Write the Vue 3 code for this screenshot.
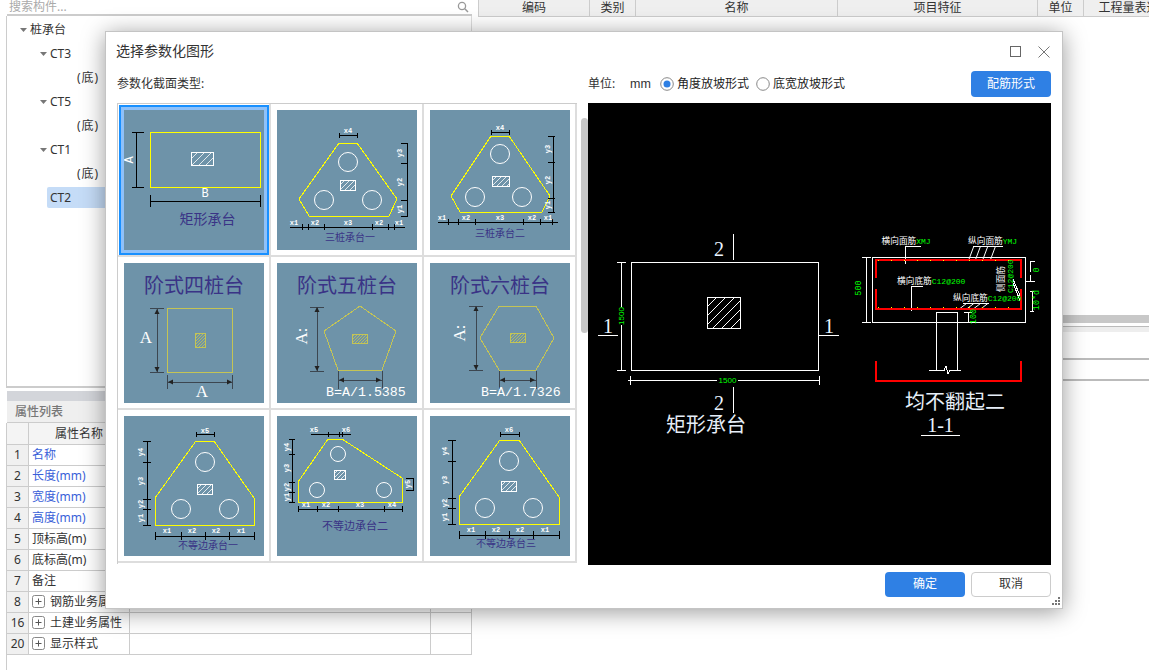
<script setup>
const hd = (y, xs, t = 3, a, b) => [
  [a ?? xs[0], y, b ?? xs[xs.length - 1], y],
  ...xs.map((x) => [x, y - t, x, y + t])
]
const vd = (x, ys, t = 4, dx = 0) => [
  [x, ys[0], x, ys[ys.length - 1]],
  ...ys.map((y) => [x - t + dx, y, x + t + dx, y])
]
const lb = (x, y, t, rot = false) => ({ x, y, t, rot })
const hatchLines = (x, y, w, h, step) => {
  const out = []
  for (let c = step; c < w + h; c += step) {
    const s = c <= w ? [x + c, y] : [x + w, y + c - w]
    const e = c <= h ? [x, y + c] : [x + c - h, y + h]
    out.push([s[0], s[1], e[0], e[1]])
  }
  return out
}
const T = (o) => ({ circles: [], lines: [], labels: [], arrows: [], color: '#ffff00', hcolor: '#fff', ...o })

const arrowV = (x, a, b) => [`${x - 2.5},${a + 5} ${x + 2.5},${a + 5} ${x},${a}`, `${x - 2.5},${b - 5} ${x + 2.5},${b - 5} ${x},${b}`]
const arrowH = (y, a, b) => [`${a + 5},${y - 2.5} ${a + 5},${y + 2.5} ${a},${y}`, `${b - 5},${y - 2.5} ${b - 5},${y + 2.5} ${b},${y}`]

const tiles = [
  T({
    rect: [26.5, 22.5, 110, 55], hatch: [67, 42, 22, 13, 7], selected: true,
    lines: [...vd(12.5, [22.5, 77.5], 6, 1.5), ...hd(91, [26.5, 136.5], 6)],
    big: [{ x: 6, y: 50, t: 'A', rot: true }, { x: 81, y: 84, t: 'B' }],
    title: { x: 83.5, y: 114, t: '矩形承台', cls: 't14' }
  }),
  T({
    poly: '62,33 80,33 120,89 112,106 32,106 22,89', hatch: [63, 70, 15, 10, 5],
    circles: [[71, 52, 9.5], [47, 90, 9.5], [95, 90, 9.5]],
    lines: [
      ...hd(25, [62, 80], 2.5),
      ...vd(130, [33, 53, 90, 106], 3.5, -3),
      ...hd(117, [25, 31, 47, 95, 111, 117], 3, 13, 128)
    ],
    labels: [lb(71, 21, 'x4'), lb(123, 43, 'y3', true), lb(123, 72, 'y2', true), lb(123, 99, 'y1', true), lb(17, 113, 'x1'), lb(38, 113, 'x2'), lb(71, 113, 'x3'), lb(102, 113, 'x2'), lb(122, 113, 'x1')],
    title: { x: 73, y: 131, t: '三桩承台一', cls: 't10' }
  }),
  T({
    poly: '61,26 79,26 120,86 112,102 30,102 21,86', hatch: [62, 66, 17, 10, 5],
    circles: [[70, 44, 9.5], [45, 87, 9.5], [92, 87, 9.5]],
    lines: [
      ...hd(22, [61, 79], 2.5),
      ...vd(123, [26, 52, 88, 102], 3.5, -2),
      ...hd(112, [18, 28, 45, 93, 110, 122], 3, 8, 128)
    ],
    labels: [lb(70, 18, 'x4'), lb(118, 39, 'y3', true), lb(118, 70, 'y2', true), lb(118, 95, 'y1', true), lb(12, 108, 'x1'), lb(36, 108, 'x2'), lb(70, 108, 'x3'), lb(102, 108, 'x2'), lb(118, 108, 'x1')],
    title: { x: 70, y: 127, t: '三桩承台二', cls: 't10' }
  }),
  T({
    color: '#c4c455', hcolor: '#c4c455',
    rect: [43.5, 45.5, 65, 64], hatch: [71, 70, 10, 14, 3],
    dark: [...vd(33, [45.5, 109], 7), ...hd(119, [43.5, 108], 7)],
    arrows: [...arrowV(33, 46, 109), ...arrowH(119, 44, 108)],
    serif: [{ x: 22, y: 80, t: 'A' }, { x: 78, y: 134, t: 'A' }],
    title: { x: 70, y: 30, t: '阶式四桩台', cls: 't20' }
  }),
  T({
    color: '#c4c455', hcolor: '#c4c455',
    poly: '83,43 119,68 105,107 61,107 47,68', hatch: [75, 71, 15, 9, 3],
    dark: [...vd(40, [44, 108], 7), ...hd(117, [61, 105], 9)],
    arrows: [...arrowV(40, 44, 108), ...arrowH(117, 62, 104)],
    serif: [{ x: 30, y: 73, t: 'A:', rot: true }],
    mono: { x: 49, y: 133, t: 'B=A/1.5385' },
    title: { x: 70, y: 30, t: '阶式五桩台', cls: 't20' }
  }),
  T({
    color: '#c4c455', hcolor: '#c4c455',
    poly: '69,43 106,43 124,75 106,107 69,107 50,75', hatch: [80, 70, 15, 9, 3],
    dark: [...vd(46, [43, 107], 7), ...hd(117, [69, 106], 9)],
    arrows: [...arrowV(46, 43, 107), ...arrowH(117, 70, 105)],
    serif: [{ x: 35, y: 70, t: 'A:', rot: true }],
    mono: { x: 51, y: 133, t: 'B=A/1.7326' },
    title: { x: 70, y: 30, t: '阶式六桩台', cls: 't20' }
  }),
  T({
    poly: '72,25 90,25 130,82 130,109 31,109 31,82', hatch: [73, 68, 15, 10, 5],
    circles: [[81, 46, 9.5], [57, 93, 9.5], [105, 93, 9.5]],
    lines: [
      ...hd(18, [72, 90], 2.5),
      ...vd(23, [25, 46, 83, 93, 109], 4, 0),
      ...hd(120, [31, 57, 81, 105, 130], 4)
    ],
    labels: [lb(81, 15, 'x5'), lb(17, 36, 'y4', true), lb(17, 65, 'y3', true), lb(17, 88, 'y2', true), lb(17, 102, 'y1', true), lb(43, 115, 'x1'), lb(68, 115, 'x2'), lb(92, 115, 'x2'), lb(117, 115, 'x1')],
    title: { x: 84, y: 133, t: '不等边承台一', cls: 't10' }
  }),
  T({
    poly: '51,23 65,23 125,62 125,86 21,86 21,66', hatch: [57, 54, 11, 9, 4],
    circles: [[61, 38, 7.5], [40, 74, 7.5], [107, 74, 7.5]],
    lines: [
      ...hd(18, [51, 62, 65], 2.5, 34, 74),
      ...vd(15, [23, 38, 66, 76, 86], 3, 0),
      ...vd(136, [62, 74], 4, -3),
      ...hd(93, [21, 40, 61, 107, 125], 3)
    ],
    labels: [lb(37, 14, 'x5'), lb(69, 14, 'x6'), lb(10, 31, 'y4', true), lb(10, 52, 'y3', true), lb(10, 71, 'y2', true), lb(10, 81, 'y1', true), lb(131, 68, 'y5', true), lb(29, 89, 'x1'), lb(49, 89, 'x2'), lb(83, 89, 'x3'), lb(115, 89, 'x4')],
    title: { x: 78, y: 114, t: '不等边承台二', cls: 't11' }
  }),
  T({
    poly: '70,24 89,24 129,81 129,108 29,108 29,81', hatch: [71, 65, 15, 10, 5],
    circles: [[79, 45, 9.5], [55, 92, 9.5], [103, 92, 9.5]],
    lines: [
      ...hd(18, [70, 89], 2.5),
      ...vd(22, [24, 45, 82, 92, 108], 4, 0),
      ...hd(119, [29, 55, 79, 103, 129], 4)
    ],
    labels: [lb(79, 14, 'x6'), lb(15, 35, 'y4', true), lb(15, 64, 'y3', true), lb(15, 87, 'y2', true), lb(15, 101, 'y1', true), lb(41, 114, 'x1'), lb(66, 114, 'x2'), lb(90, 114, 'x2'), lb(115, 114, 'x1')],
    title: { x: 76, y: 131, t: '不等边承台三', cls: 't10' }
  })
]

const treeRows = [
  { t: '桩承台', lvl: 0, arrow: true },
  { t: 'CT3', lvl: 1, arrow: true },
  { t: '(底)', lvl: 2 },
  { t: 'CT5', lvl: 1, arrow: true },
  { t: '(底)', lvl: 2 },
  { t: 'CT1', lvl: 1, arrow: true },
  { t: '(底)', lvl: 2 },
  { t: 'CT2', lvl: 1, sel: true }
]
const props = [
  { n: 1, t: '名称', blue: true },
  { n: 2, t: '长度(mm)', blue: true },
  { n: 3, t: '宽度(mm)', blue: true },
  { n: 4, t: '高度(mm)', blue: true },
  { n: 5, t: '顶标高(m)' },
  { n: 6, t: '底标高(m)' },
  { n: 7, t: '备注' },
  { n: 8, t: '钢筋业务属性', plus: true },
  { n: 16, t: '土建业务属性', plus: true },
  { n: 20, t: '显示样式', plus: true }
]
const cols = [
  { t: '编码', w: 111 }, { t: '类别', w: 46 }, { t: '名称', w: 202 },
  { t: '项目特征', w: 200 }, { t: '单位', w: 46 }, { t: '工程量表达式', w: 102 }
]
const prevHatch = hatchLines(119.5, 194.5, 33, 31, 9)
const topSlants = [[355, 108], [375, 108], [397, 108], [420, 108]].map(([x, y]) => [262 + x / 3, 122 + y / 3, 262 + (x + 16) / 3, 122 + 65 / 3])
const botSlants = [[328, 252], [350, 252], [370, 252], [392, 252]].map(([x, y]) => [262 + x / 3, 122 + y / 3, 262 + (x + 22) / 3, 122 + 235 / 3])
</script>

<template>
  <div class="page">
    <aside class="left">
      <div class="search">
        <span>搜索构件...</span>
        <svg width="12" height="12" viewBox="0 0 12 12"><circle cx="5" cy="5" r="3.6" fill="none" stroke="#999" stroke-width="1.3" /><path d="M7.8 7.8L11 11" stroke="#999" stroke-width="1.5" /></svg>
      </div>
      <div class="tree">
        <div v-for="(r, i) in treeRows" :key="i" class="tree-row" :class="['lvl' + r.lvl, { sel: r.sel }]">
          <svg v-if="r.arrow" class="caret" width="7" height="4" viewBox="0 0 7 4"><path d="M0 0H7L3.5 4Z" fill="#777" /></svg>
          <span>{{ r.t }}</span>
        </div>
      </div>
      <div class="greybar"></div>
      <div class="prop-title">属性列表</div>
      <div class="ptable">
        <div class="prow head">
          <div class="c0"></div><div class="c1 hc">属性名称</div><div class="c2"></div><div class="c3"></div>
        </div>
        <div v-for="p in props" :key="p.n" class="prow">
          <div class="c0">{{ p.n }}</div>
          <div class="c1" :class="{ blue: p.blue }">
            <svg v-if="p.plus" class="plus" width="13" height="13" viewBox="0 0 13 13"><rect x="0.5" y="0.5" width="12" height="12" rx="2" fill="#fff" stroke="#888" /><path d="M3.5 6.5H9.5M6.5 3.5V9.5" stroke="#555" /></svg>
            <span class="ptxt">{{ p.t }}</span>
          </div>
          <div class="c2"></div><div class="c3"></div>
        </div>
      </div>
    </aside>

    <main class="right">
      <div class="rhead">
        <div v-for="c in cols" :key="c.t" class="rcol" :style="{ width: c.w + 'px' }">{{ c.t }}</div>
      </div>
      <div class="hbar"><div class="thumb"></div></div>
      <div class="band"></div>
      <div class="rline first"></div>
      <div class="rline"></div>
    </main>

    <section class="dialog">
      <header class="dlg-head">
        <span class="dlg-title">选择参数化图形</span>
        <div class="win-btns">
          <svg width="11" height="11" viewBox="0 0 11 11"><rect x="0.5" y="0.5" width="10" height="10" fill="none" stroke="#666" /></svg>
          <svg width="12" height="12" viewBox="0 0 12 12"><path d="M0.5 0.5L11.5 11.5M11.5 0.5L0.5 11.5" stroke="#777" /></svg>
        </div>
      </header>
      <div class="toolbar">
        <span class="tb-label">参数化截面类型:</span>
        <span class="unit">单位:</span>
        <span class="mm">mm</span>
        <label class="radio"><svg width="14" height="14" viewBox="0 0 14 14"><circle cx="7" cy="7" r="6.3" fill="#fff" stroke="#888" /><circle cx="7" cy="7" r="3.5" fill="#2f80e4" /></svg>角度放坡形式</label>
        <label class="radio"><svg width="14" height="14" viewBox="0 0 14 14"><circle cx="7" cy="7" r="6.3" fill="#fff" stroke="#888" /></svg>底宽放坡形式</label>
        <button class="btn primary rebar">配筋形式</button>
      </div>
      <div class="body">
        <div class="grid-area">
          <div class="grid">
            <div v-for="(tile, i) in tiles" :key="i" class="cell">
              <svg class="tile" :class="{ selected: tile.selected }" width="140" height="140" viewBox="0 0 140 140">
                <rect v-if="tile.rect" :x="tile.rect[0]" :y="tile.rect[1]" :width="tile.rect[2]" :height="tile.rect[3]" fill="none" :stroke="tile.color" class="crisp" />
                <polygon v-if="tile.poly" :points="tile.poly" fill="none" :stroke="tile.color" class="crisp" />
                <circle v-for="(c, j) in tile.circles" :key="'c' + j" :cx="c[0]" :cy="c[1]" :r="c[2]" fill="none" stroke="#fff" />
                <rect :x="tile.hatch[0]" :y="tile.hatch[1]" :width="tile.hatch[2]" :height="tile.hatch[3]" fill="none" :stroke="tile.hcolor" class="crisp" />
                <line v-for="(l, j) in hatchLines(tile.hatch[0], tile.hatch[1], tile.hatch[2], tile.hatch[3], tile.hatch[4])" :key="'h' + j" :x1="l[0]" :y1="l[1]" :x2="l[2]" :y2="l[3]" :stroke="tile.hcolor" stroke-width="0.8" />
                <line v-for="(l, j) in tile.lines" :key="'l' + j" :x1="l[0]" :y1="l[1]" :x2="l[2]" :y2="l[3]" stroke="#000" class="crisp" />
                <line v-for="(l, j) in tile.dark" :key="'d' + j" :x1="l[0]" :y1="l[1]" :x2="l[2]" :y2="l[3]" stroke="#3c4650" class="crisp" />
                <polygon v-for="(a, j) in tile.arrows" :key="'a' + j" :points="a" fill="#222" />
                <text v-for="(b, j) in tile.labels" :key="'t' + j" class="lbl" :x="b.x" :y="b.y" :transform="b.rot ? `rotate(-90 ${b.x} ${b.y})` : undefined">{{ b.t }}</text>
                <text v-for="(b, j) in tile.big" :key="'b' + j" class="bigl" :x="b.x" :y="b.y" :transform="b.rot ? `rotate(-90 ${b.x} ${b.y})` : undefined">{{ b.t }}</text>
                <text v-for="(b, j) in tile.serif" :key="'s' + j" class="serifl" :x="b.x" :y="b.y" :transform="b.rot ? `rotate(-90 ${b.x} ${b.y})` : undefined">{{ b.t }}</text>
                <text v-if="tile.mono" class="monol" :x="tile.mono.x" :y="tile.mono.y">{{ tile.mono.t }}</text>
                <text class="ttl" :class="tile.title.cls" :x="tile.title.x" :y="tile.title.y">{{ tile.title.t }}</text>
              </svg>
            </div>
          </div>
          <div class="scroll"></div>
        </div>
        <svg class="preview" width="463" height="462" viewBox="0 0 463 462">
          <g class="crisp" fill="none" stroke="#fff">
            <rect x="43.5" y="159.5" width="187" height="108" />
            <rect x="119.5" y="194.5" width="33" height="31" />
            <path d="M33.5 159.5V204M33.5 222V267.5M29 159.5H38M29 267.5H38M40 277.5H129M150 277.5H231M42 273V282M231 273V282" />
            <path d="M145.5 131V157M145.5 284V310M10 232.5H30M231 232.5H251M333 332.5H372" />
          </g>
          <line v-for="(l, i) in prevHatch" :key="i" :x1="l[0]" :y1="l[1]" :x2="l[2]" :y2="l[3]" stroke="#fff" />
          <text class="grn s8" x="33" y="213" transform="rotate(-90 33 213)">1500</text>
          <text class="grn s8" x="139.5" y="277">1500</text>
          <text class="dig" x="131" y="153">2</text>
          <text class="dig" x="131" y="307">2</text>
          <text class="dig" x="20" y="230">1</text>
          <text class="dig" x="241" y="230">1</text>
          <text class="prevt" x="118" y="329">矩形承台</text>

          <g class="crisp" fill="none" stroke="#fff">
            <rect x="284.5" y="154.5" width="153" height="65" />
            <path d="M348.5 267V209.5H369.5V267M341 267.5H356M362 267.5H373" />
            <path d="M356 267.5L358 263L360 271L362 267.5" />
            <path d="M278.5 154.5V219.5M274 154.5H283M274 219.5H283" />
            <path d="M333 143.5H317.5V161" />
            <path d="M415 143.5H385" />
            <path d="M335 183.5H323.5V208" />
            <path d="M401 200.5H375" />
            <path d="M442 158V169M442 158H447M437 178H447M442 178V172" />
            <path d="M442 188H446M442 208H446M444 188V208" />
            <path d="M380 209V220M376 209H384" />
            <path d="M425 176L433 195M425 180L433 200" />
          </g>
          <line v-for="(l, i) in topSlants" :key="'ts' + i" :x1="l[0]" :y1="l[1]" :x2="l[2]" :y2="l[3]" stroke="#fff" />
          <line v-for="(l, i) in botSlants" :key="'bs' + i" :x1="l[0]" :y1="l[1]" :x2="l[2]" :y2="l[3]" stroke="#fff" />
          <g class="crisp" fill="none" stroke="#f00" stroke-width="2">
            <path d="M288 175V157H433V175" />
            <path d="M288 186V206H433V186" />
            <path d="M288 258V277.5H433V258" />
          </g>
          <path d="M290 157.5H432M290 204.5H432" stroke="#ff0" stroke-width="1" stroke-dasharray="1 12" />
          <text class="gm" x="271" y="185" transform="rotate(-90 271 185)">500</text>
          <text class="gm" x="449" y="167" transform="rotate(-90 449 167)">0</text>
          <text class="gm" x="449" y="197" transform="rotate(-90 449 197)">10*d</text>
          <text class="gm" x="386" y="213.5" transform="rotate(-90 386 213.5)">100</text>
          <text class="anno" x="293.5" y="141">横向面筋<tspan class="gt">XMJ</tspan></text>
          <text class="anno" x="380" y="141">纵向面筋<tspan class="gt">YMJ</tspan></text>
          <text class="anno" x="309" y="181">横向底筋<tspan class="gt">C12@200</tspan></text>
          <text class="anno" x="365" y="198">纵向底筋<tspan class="gt">C12@200</tspan></text>
          <text class="anno" x="416" y="189" transform="rotate(-90 416 189)">侧面筋</text>
          <text class="anno" x="425" y="190" transform="rotate(-90 425 190)"><tspan class="gt">C12@200</tspan></text>
          <text class="prevt" x="367" y="306">均不翻起二</text>
          <text class="dig" x="352.5" y="329">1-1</text>
        </svg>
      </div>
      <footer class="foot">
        <button class="btn primary">确定</button>
        <button class="btn ghost">取消</button>
      </footer>
      <svg class="grip" width="9" height="9" viewBox="0 0 9 9"><g fill="#777"><rect x="6" y="0" width="2" height="2" /><rect x="3" y="3" width="2" height="2" /><rect x="6" y="3" width="2" height="2" /><rect x="0" y="6" width="2" height="2" /><rect x="3" y="6" width="2" height="2" /><rect x="6" y="6" width="2" height="2" /></g></svg>
    </section>
  </div>
</template>

<style>
html, body { margin: 0; background: #fff; }
</style>

<style scoped>
.page {
  position: relative;
  display: flex;
  width: 1149px;
  height: 670px;
  overflow: hidden;
  background: #fff;
  font: 12px/1.2 "Noto Sans", "Noto Sans CJK SC", sans-serif;
  color: #333;
}
.left {
  box-sizing: border-box;
  flex: none;
  width: 472px;
  padding-left: 6px;
  display: flex;
  flex-direction: column;
}
.search {
  box-sizing: border-box;
  height: 16px;
  margin-left: 1px;
  padding: 0 3px 0 2px;
  display: flex;
  align-items: center;
  justify-content: space-between;
  border-bottom: 2px solid #ccc;
  color: #aaa;
  line-height: 14px;
  overflow: hidden;
}
.tree {
  box-sizing: border-box;
  height: 372px;
  padding-top: 2px;
  border-left: 1px solid #ccc;
  border-bottom: 2px solid #ccc;
  border-right: 1px solid #ddd;
}
.tree-row {
  position: relative;
  height: 24px;
  line-height: 24px;
  font-size: 12px;
}
.tree-row span { position: absolute; top: 0; }
.caret { position: absolute; top: 10px; }
.lvl0 span { left: 23px; }
.lvl0 .caret { left: 13px; }
.lvl1 span { left: 43px; }
.lvl1 .caret { left: 33px; }
.lvl2 span { left: 70px; letter-spacing: 1px; }
.tree-row.sel::before {
  content: "";
  position: absolute;
  left: 40px;
  width: 120px;
  top: 1px;
  height: 21px;
  border-radius: 2px;
  background: #c5dcf7;
}
.greybar { height: 10px; margin: 3px 0 0 1px; background: #d3d5da; }
.prop-title {
  box-sizing: border-box;
  height: 22px;
  line-height: 22px;
  padding-left: 8px;
  margin-left: 1px;
  background: #efefef;
  color: #777;
  font-weight: 500;
  border-bottom: 1px solid #ccc;
}
.ptable { flex: 1; border-left: 1px solid #ccc; }
.prow {
  display: grid;
  grid-template-columns: 22px 101px 301px 41px;
  height: 21px;
  box-sizing: border-box;
  border-bottom: 1px solid #ccc;
  line-height: 20px;
}
.prow > div { border-right: 1px solid #ccc; box-sizing: border-box; height: 20px; }
.c0 { background: #f0f0f0; text-align: center; }
.prow.head { height: 22px; }
.prow.head > div { background: #f4f4f4; height: 21px; line-height: 21px; }
.c1 { position: relative; padding-left: 3px; white-space: nowrap; }
.prow .hc { padding-left: 26px; }
.blue { color: #3a5fd9; }
.plus { position: absolute; left: 3px; top: 3px; }
.plus + .ptxt { position: absolute; left: 21px; top: 0; }

.right { flex: 1; padding-left: 6px; border-left: 0; display: flex; flex-direction: column; }
.rhead {
  display: flex;
  height: 17px;
  box-sizing: border-box;
  background: #efefef;
  border-bottom: 1px solid #ccc;
  border-left: 1px solid #ccc;
  overflow: hidden;
}
.rcol {
  box-sizing: border-box;
  flex: none;
  text-align: center;
  line-height: 15px;
  border-right: 1px solid #ccc;
  white-space: nowrap;
  overflow: hidden;
}
.hbar { display: flex; justify-content: flex-end; margin-top: 298px; padding-right: 11px; }
.thumb { width: 200px; height: 8px; border-radius: 4px; background: #c8c8c8; }
.band { height: 5px; margin-top: 3px; background: #eee; border-top: 1px solid #bbb; }
.rline { height: 2px; margin-top: 19px; background: #bbb; }
.rline.first { margin-top: 26px; }

.dialog {
  position: absolute;
  left: 105px;
  top: 31px;
  box-sizing: border-box;
  width: 958px;
  height: 578px;
  padding: 0 11px 0 11px;
  background: #fff;
  border: 1px solid #c4c4c4;
  box-shadow: 0 3px 22px rgba(0, 0, 0, 0.4);
  display: flex;
  flex-direction: column;
}
.dlg-head {
  height: 39px;
  flex: none;
  display: flex;
  align-items: center;
  justify-content: space-between;
}
.dlg-title { font-size: 14px; margin-left: -1px; }
.win-btns { display: flex; gap: 17px; align-items: center; margin-right: 1px; }
.win-btns svg { display: block; }
.toolbar {
  height: 26px;
  flex: none;
  margin-bottom: 6px;
  display: flex;
  align-items: center;
}
.tb-label { width: 471px; }
.unit { width: 42px; }
.mm { width: 30px; font-family: "Liberation Sans", sans-serif; font-size: 12.5px; }
.radio { display: flex; align-items: center; gap: 3px; margin-right: 7px; color: #222; white-space: nowrap; }
.btn {
  box-sizing: border-box;
  width: 80px;
  height: 26px;
  border-radius: 4px;
  font: inherit;
  padding: 0;
}
.primary { background: #2f80e4; color: #fff; border: 0; }
.ghost { background: #fff; color: #333; border: 1px solid #ccc; }
.rebar { margin-left: auto; }
.body { flex: none; height: 462px; display: flex; align-items: flex-start; }
.grid-area { position: relative; flex: none; width: 471px; height: 462px; }
.grid {
  box-sizing: border-box;
  width: 460px;
  height: 461px;
  display: grid;
  grid-template-columns: repeat(3, 153px);
  grid-auto-rows: 153px;
  border-top: 1px solid #ccc;
  border-left: 1px solid #ccc;
}
.cell {
  box-sizing: border-box;
  padding: 6px 5px 5px 6px;
  border-right: 2px solid #ddd;
  border-bottom: 2px solid #ddd;
}
.tile { display: block; background: #6e93a9; }
.tile.selected { position: relative; box-shadow: 0 0 0 3px #8fc1f9, 0 0 0 5px #1890ff; }
.scroll {
  position: absolute;
  left: 464px;
  top: 15px;
  width: 7px;
  height: 215px;
  border-radius: 4px;
  background: #c8c8c8;
}
.preview { display: block; flex: none; background: #000; }
.crisp { shape-rendering: crispEdges; }
.foot { flex: none; display: flex; justify-content: flex-end; gap: 6px; padding-top: 7px; }
.foot .btn { height: 25px; }
.grip { position: absolute; right: 1px; bottom: 2px; }

text { text-anchor: middle; font-family: "Noto Sans CJK SC", sans-serif; }
.lbl { font: bold 7px "Liberation Mono", monospace; fill: #fff; dominant-baseline: central; }
.bigl { font: 12px "Liberation Mono", monospace; fill: #fff; dominant-baseline: central; }
.serifl { font: 17px "Liberation Serif", serif; fill: #fff; }
.monol { font: 13.3px "Liberation Mono", monospace; fill: #fff; text-anchor: start; }
.ttl { fill: #3a3386; }
.t10 { font-size: 10px; }
.t11 { font-size: 11px; }
.t14 { font-size: 14px; }
.t20 { font-size: 20px; }
.grn { fill: #0f0; font-family: "Liberation Sans", sans-serif; dominant-baseline: central; }
.s8 { font-size: 8px; }
.gm { font: 8.5px "Liberation Mono", monospace; fill: #0f0; dominant-baseline: central; }
.gt { font: 8px "Liberation Mono", monospace; fill: #0f0; }
.dig { font: 20px "Liberation Serif", serif; fill: #eaf4ff; }
.prevt { font-size: 20px; fill: #e6eef8; }
.anno { font-size: 8.7px; fill: #fff; text-anchor: start; font-family: "Noto Sans CJK SC", sans-serif; }
</style>
